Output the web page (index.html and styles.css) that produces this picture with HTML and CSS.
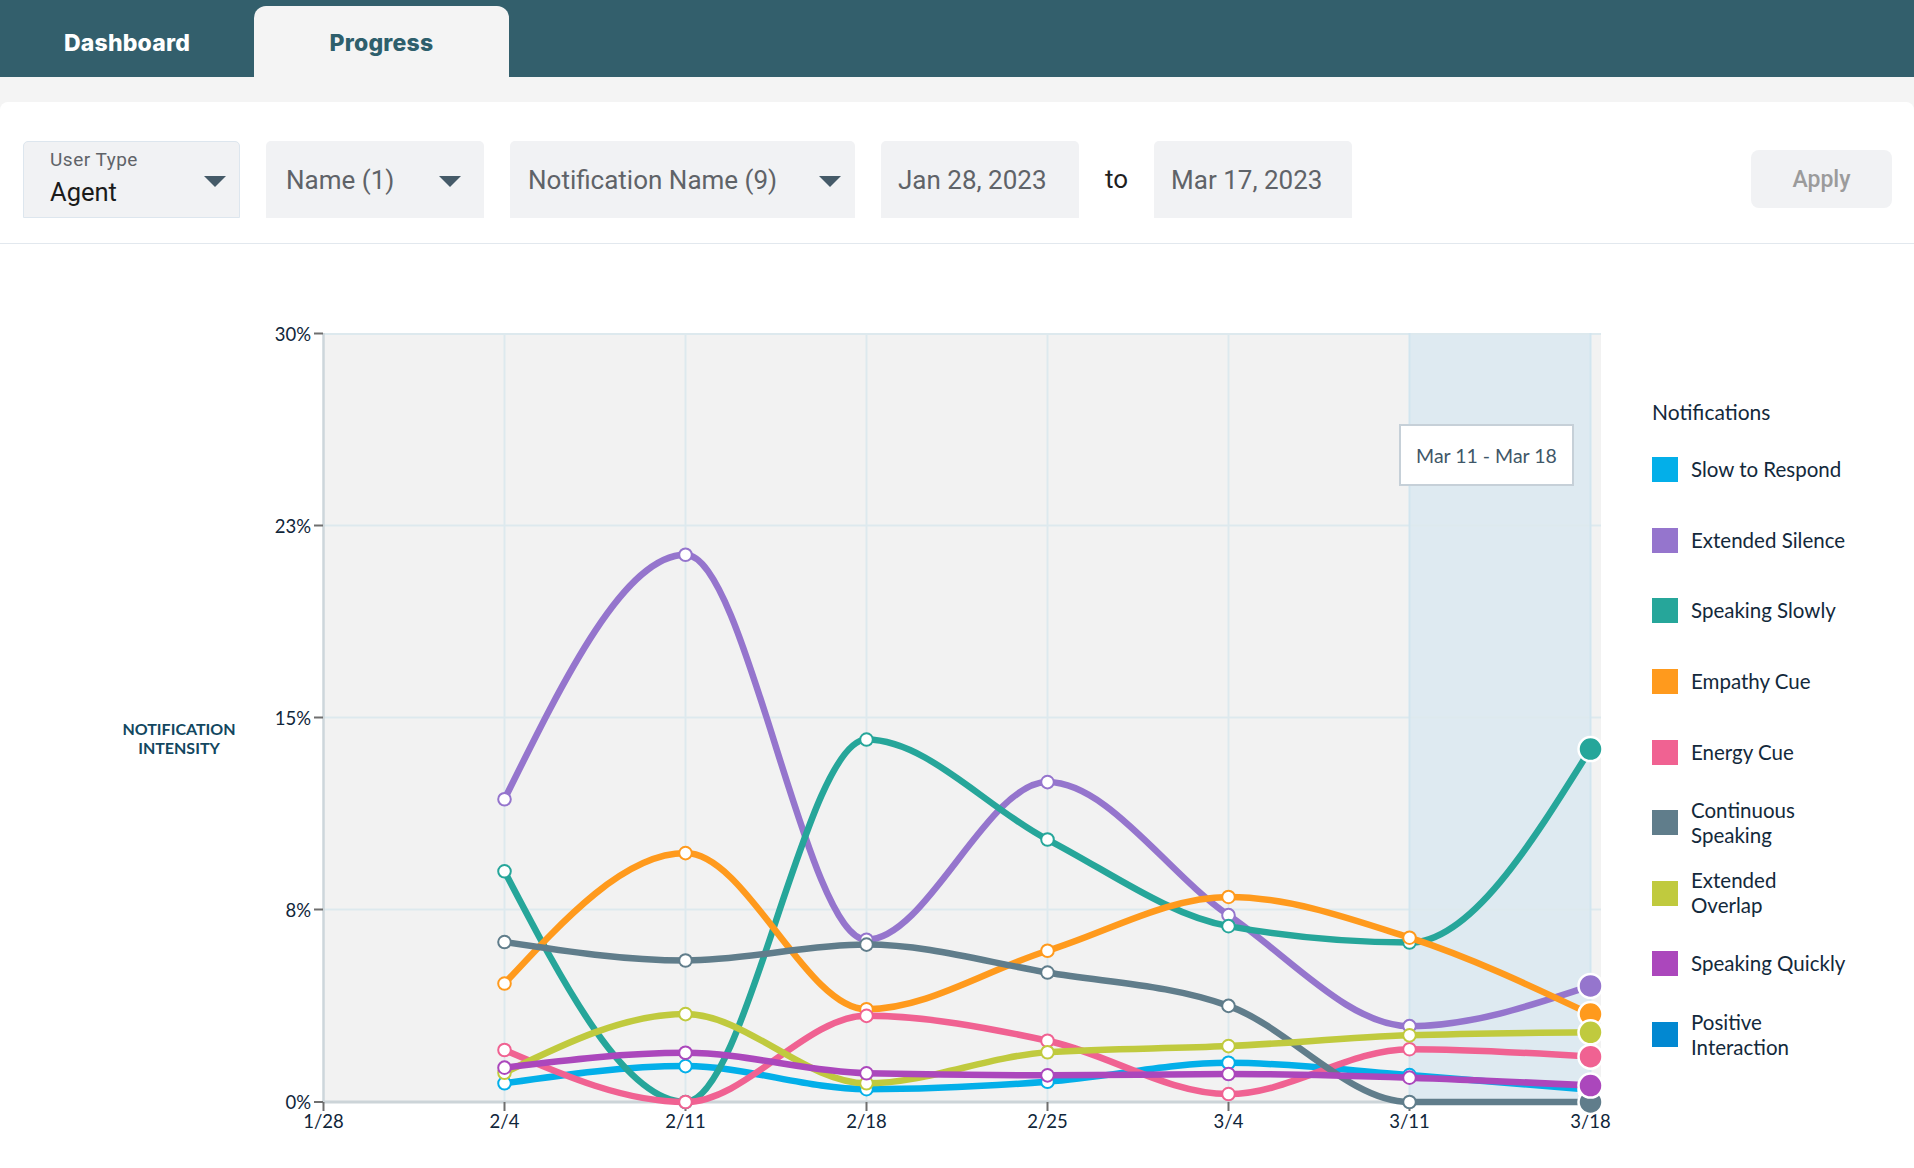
FILE: index.html
```html
<!DOCTYPE html>
<html lang="en">
<head>
<meta charset="utf-8">
<title>Progress</title>
<link rel="stylesheet" href="styles.css">
</head>
<body>
<header class="topbar">
  <nav class="tabs">
    <div class="tab">Dashboard</div>
    <div class="tab tab-active">Progress</div>
  </nav>
</header>
<main class="panel">
  <div class="filters">
    <div class="select select-user">
      <div class="select-stack">
        <div class="select-label">User Type</div>
        <div class="select-value">Agent</div>
      </div>
      <span class="caret"></span>
    </div>
    <div class="select select-name"><span class="select-text">Name (1)</span><span class="caret"></span></div>
    <div class="select select-notif"><span class="select-text">Notification Name (9)</span><span class="caret"></span></div>
    <div class="select date"><span class="select-text">Jan 28, 2023</span></div>
    <span class="to">to</span>
    <div class="select date"><span class="select-text">Mar 17, 2023</span></div>
    <button class="apply">Apply</button>
  </div>
  <section class="chart-row">
    <div class="y-title">NOTIFICATION<br>INTENSITY</div>
    <svg class="chart" width="1375" height="924" viewBox="265 244 1375 924">
      <rect class="plot-bg" x="323" y="333" width="1278" height="769"></rect>
      <rect class="band" x="1409.5" y="333" width="181" height="769"></rect>
      <g class="grid">
        <line x1="323" y1="334" x2="1601" y2="334"></line>
        <line x1="323" y1="525.5" x2="1601" y2="525.5"></line>
        <line x1="323" y1="717.5" x2="1601" y2="717.5"></line>
        <line x1="323" y1="909.5" x2="1601" y2="909.5"></line>
        <line x1="504.5" y1="333" x2="504.5" y2="1102"></line>
        <line x1="685.5" y1="333" x2="685.5" y2="1102"></line>
        <line x1="866.5" y1="333" x2="866.5" y2="1102"></line>
        <line x1="1047.5" y1="333" x2="1047.5" y2="1102"></line>
        <line x1="1228.5" y1="333" x2="1228.5" y2="1102"></line>
        <line class="band-edge" x1="1409.5" y1="333" x2="1409.5" y2="1102"></line>
        <line class="band-edge" x1="1590.5" y1="333" x2="1590.5" y2="1102"></line>
      </g>
      <g class="axis">
        <line class="axis-y" x1="323.5" y1="333" x2="323.5" y2="1102"></line>
        <line class="axis-x" x1="322" y1="1102" x2="1601" y2="1102"></line>
        <g class="ticks">
          <line x1="314" y1="333.5" x2="323" y2="333.5"></line>
          <line x1="314" y1="525.5" x2="323" y2="525.5"></line>
          <line x1="314" y1="717.5" x2="323" y2="717.5"></line>
          <line x1="314" y1="909.5" x2="323" y2="909.5"></line>
          <line x1="314" y1="1102" x2="323" y2="1102"></line>
          <line x1="323.5" y1="1102" x2="323.5" y2="1111"></line>
          <line x1="504.5" y1="1102" x2="504.5" y2="1111"></line>
          <line x1="685.5" y1="1102" x2="685.5" y2="1111"></line>
          <line x1="866.5" y1="1102" x2="866.5" y2="1111"></line>
          <line x1="1047.5" y1="1102" x2="1047.5" y2="1111"></line>
          <line x1="1228.5" y1="1102" x2="1228.5" y2="1111"></line>
          <line x1="1409.5" y1="1102" x2="1409.5" y2="1111"></line>
          <line x1="1590.5" y1="1102" x2="1590.5" y2="1111"></line>
        </g>
        <g class="ylabels">
          <text x="311" y="340.5">30%</text>
          <text x="311" y="532.5">23%</text>
          <text x="311" y="724.5">15%</text>
          <text x="311" y="916.5">8%</text>
          <text x="311" y="1109">0%</text>
        </g>
        <g class="xlabels">
          <text x="323.5" y="1127.5">1/28</text>
          <text x="504.5" y="1127.5">2/4</text>
          <text x="685.5" y="1127.5">2/11</text>
          <text x="866.5" y="1127.5">2/18</text>
          <text x="1047.5" y="1127.5">2/25</text>
          <text x="1228.5" y="1127.5">3/4</text>
          <text x="1409.5" y="1127.5">3/11</text>
          <text x="1590.5" y="1127.5">3/18</text>
        </g>
      </g>
      <g id="series"></g>
      <g class="tooltip">
        <rect x="1400" y="425" width="173" height="60"></rect>
        <text x="1486.5" y="463">Mar 11 - Mar 18</text>
      </g>
    </svg>
    <aside class="legend">
      <div class="legend-title">Notifications</div>
      <ul class="legend-list">
        <li class="legend-item"><span class="swatch sw-slow"></span><span class="legend-label">Slow to Respond</span></li>
        <li class="legend-item"><span class="swatch sw-silence"></span><span class="legend-label">Extended Silence</span></li>
        <li class="legend-item"><span class="swatch sw-slowly"></span><span class="legend-label">Speaking Slowly</span></li>
        <li class="legend-item"><span class="swatch sw-empathy"></span><span class="legend-label">Empathy Cue</span></li>
        <li class="legend-item"><span class="swatch sw-energy"></span><span class="legend-label">Energy Cue</span></li>
        <li class="legend-item"><span class="swatch sw-continuous"></span><span class="legend-label">Continuous<br>Speaking</span></li>
        <li class="legend-item"><span class="swatch sw-overlap"></span><span class="legend-label">Extended<br>Overlap</span></li>
        <li class="legend-item"><span class="swatch sw-quickly"></span><span class="legend-label">Speaking Quickly</span></li>
        <li class="legend-item"><span class="swatch sw-positive"></span><span class="legend-label">Positive<br>Interaction</span></li>
      </ul>
    </aside>
  </section>
</main>
<script src="chart.js"></script>
</body>
</html>
```

FILE: styles.css
```css
* { box-sizing: border-box; }
html, body { margin: 0; padding: 0; }
body {
  width: 1914px;
  height: 1168px;
  overflow: hidden;
  background: #f4f4f4;
  font-family: "Lato", "Noto Sans", sans-serif;
}

/* top bar */
.topbar {
  height: 77px;
  background: #335f6c;
  display: flex;
  align-items: flex-end;
}
.tabs { display: flex; }
.tab {
  width: 254px;
  height: 71px;
  display: flex;
  align-items: center;
  justify-content: center;
  padding-top: 3px;
  font-family: "Inter", "Lato", sans-serif;
  font-weight: 800;
  font-size: 23px;
  letter-spacing: 0.2px;
  color: #ffffff;
}
.tab-active {
  width: 255px;
  background: #f4f4f4;
  color: #2e5f6c;
  border-radius: 12px 12px 0 0;
}

/* panel */
.panel {
  margin-top: 25px;
  height: 1066px;
  background: #ffffff;
  border-radius: 8px 8px 0 0;
}

/* filters */
.filters {
  display: flex;
  align-items: flex-start;
  gap: 26px;
  height: 142px;
  padding: 39px 22px 25px 23px;
  border-bottom: 1px solid #e2e8ee;
}
.select {
  flex: none;
  height: 77px;
  display: flex;
  align-items: center;
  background: #f1f2f4;
  border-radius: 5px 5px 0 0;
  font-family: "Roboto", "Liberation Sans", sans-serif;
}
.select-text {
  font-size: 26px;
  color: #5f6368;
  white-space: nowrap;
}
.select-user {
  width: 217px;
  border: 1px solid #dde6ee;
  padding: 0 13px 0 26px;
}
.select-stack {
  display: flex;
  flex-direction: column;
  margin-bottom: 2px;
}
.select-label {
  font-size: 19px;
  line-height: 20px;
  letter-spacing: 0.5px;
  color: #5f6368;
}
.select-value {
  font-size: 25.5px;
  line-height: 30px;
  color: #1b1b1b;
  margin-top: 7px;
}
.select-name {
  width: 218px;
  padding: 0 23px 0 20px;
}
.select-notif {
  width: 345px;
  padding: 0 14px 0 18px;
}
.date {
  width: 198px;
  padding-left: 17px;
}
.caret {
  flex: none;
  margin-left: auto;
  margin-top: 3px;
  width: 0;
  height: 0;
  border-left: 11px solid transparent;
  border-right: 11px solid transparent;
  border-top: 11px solid #455a68;
}
.to {
  line-height: 77px;
  font-family: "Roboto", "Liberation Sans", sans-serif;
  font-size: 26px;
  color: #1f1f1f;
}
.apply {
  margin-left: auto;
  margin-top: 9px;
  width: 141px;
  height: 58px;
  border: 0;
  border-radius: 8px;
  background: #f1f2f4;
  color: #9b9b9b;
  font-family: "Roboto", "Liberation Sans", sans-serif;
  font-weight: 500;
  font-size: 23px;
  padding: 0;
}

/* chart row */
.chart-row {
  display: flex;
  align-items: flex-start;
}
.y-title {
  flex: none;
  width: 172px;
  margin-left: 93px;
  margin-top: 475px;
  text-align: center;
  font-weight: 700;
  font-size: 16px;
  line-height: 19px;
  color: #124760;
}
.chart { display: block; flex: none; }
.plot-bg { fill: #f2f2f2; }
.band { fill: #deeaf1; }
.grid line { stroke: #dde9ee; stroke-width: 2; }
.grid .band-edge { stroke: #d2e5ef; }
.axis-y { stroke: #cdd6db; stroke-width: 2.5; }
.axis-x { stroke: #ccd4d8; stroke-width: 3; }
.ticks line { stroke: #6f6f6f; stroke-width: 2; }
.ylabels text {
  font-family: "Lato", sans-serif;
  font-size: 18.5px;
  fill: #10263a;
  text-anchor: end;
}
.xlabels text {
  font-family: "Lato", sans-serif;
  font-size: 18.5px;
  fill: #10263a;
  text-anchor: middle;
}
.series-line { fill: none; stroke-width: 6.5; stroke-linejoin: round; }
.dot { fill: #ffffff; stroke-width: 2; }
.dot-end { stroke: #ffffff; stroke-width: 2.5; }
.tooltip rect { fill: #ffffff; stroke: #c6d0d8; stroke-width: 2; }
.tooltip text {
  font-family: "Lato", sans-serif;
  font-size: 19.5px;
  fill: #3f5768;
  text-anchor: middle;
}

/* legend */
.legend {
  flex: none;
  margin-left: 12px;
  margin-top: 156px;
  color: #13293b;
}
.legend-title {
  font-size: 21px;
  line-height: 24px;
}
.legend-list {
  list-style: none;
  margin: 10.5px 0 0;
  padding: 0;
}
.legend-item {
  height: 70.6px;
  display: flex;
  align-items: center;
}
.swatch {
  flex: none;
  width: 26px;
  height: 25px;
  margin-right: 13px;
}
.legend-label {
  font-size: 20.5px;
  line-height: 25px;
  white-space: nowrap;
}
.sw-slow { background: #03afe9; }
.sw-silence { background: #9575cd; }
.sw-slowly { background: #26a69a; }
.sw-empathy { background: #ff9a1d; }
.sw-energy { background: #f06292; }
.sw-continuous { background: #607d8b; }
.sw-overlap { background: #c0ca3e; }
.sw-quickly { background: #ab47bc; }
.sw-positive { background: #0288d1; }
```

FILE: chart.js
```js
(function () {
  var NS = "http://www.w3.org/2000/svg";
  var X0 = 323.5, DX = 181, Y0 = 1102, H = 769, MAX = 30;
  var series = [
    { c: "#03afe9", v: [0.73, 1.40, 0.50, 0.79, 1.53, 1.05, 0.48] },
    { c: "#9575cd", v: [11.81, 21.35, 6.33, 12.48, 7.29, 2.96, 4.53] },
    { c: "#26a69a", v: [9.0, 0, 14.14, 10.24, 6.86, 6.22, 13.77] },
    { c: "#ff9a1d", v: [4.62, 9.71, 3.62, 5.90, 8.0, 6.41, 3.43] },
    { c: "#f06292", v: [2.03, 0, 3.36, 2.39, 0.31, 2.06, 1.77] },
    { c: "#607d8b", v: [6.24, 5.52, 6.14, 5.05, 3.75, 0, 0] },
    { c: "#c0ca3e", v: [1.14, 3.43, 0.73, 1.94, 2.18, 2.60, 2.72] },
    { c: "#ab47bc", v: [1.34, 1.92, 1.12, 1.04, 1.09, 0.95, 0.64] }
  ];
  function sign(x) { return x < 0 ? -1 : 1; }
  function mono(p) {
    var n = p.length, s = [], t = [], i;
    for (i = 0; i < n - 1; i++) s[i] = (p[i + 1][1] - p[i][1]) / (p[i + 1][0] - p[i][0]);
    for (i = 1; i < n - 1; i++) {
      var h0 = p[i][0] - p[i - 1][0], h1 = p[i + 1][0] - p[i][0];
      var s0 = s[i - 1], s1 = s[i];
      var q = (s0 * h1 + s1 * h0) / (h0 + h1);
      t[i] = (sign(s0) + sign(s1)) * Math.min(Math.abs(s0), Math.abs(s1), 0.5 * Math.abs(q)) || 0;
    }
    t[0] = (3 * s[0] - t[1]) / 2;
    t[n - 1] = (3 * s[n - 2] - t[n - 2]) / 2;
    var d = "M" + p[0][0] + "," + p[0][1];
    for (i = 0; i < n - 1; i++) {
      var dx = (p[i + 1][0] - p[i][0]) / 3;
      d += "C" + (p[i][0] + dx) + "," + (p[i][1] + dx * t[i]) + "," +
        (p[i + 1][0] - dx) + "," + (p[i + 1][1] - dx * t[i + 1]) + "," +
        p[i + 1][0] + "," + p[i + 1][1];
    }
    return d;
  }
  var g = document.getElementById("series");
  series.forEach(function (sr) {
    var pts = sr.v.map(function (v, i) { return [X0 + DX * (i + 1), Y0 - v / MAX * H]; });
    var path = document.createElementNS(NS, "path");
    path.setAttribute("d", mono(pts));
    path.setAttribute("class", "series-line");
    path.setAttribute("stroke", sr.c);
    g.appendChild(path);
    pts.forEach(function (pt, i) {
      var c = document.createElementNS(NS, "circle");
      c.setAttribute("cx", pt[0]);
      c.setAttribute("cy", pt[1]);
      if (i === pts.length - 1) {
        c.setAttribute("r", 12);
        c.setAttribute("class", "dot-end");
        c.setAttribute("fill", sr.c);
      } else {
        c.setAttribute("r", 6.3);
        c.setAttribute("class", "dot");
        c.setAttribute("stroke", sr.c);
      }
      g.appendChild(c);
    });
  });
})();
```
